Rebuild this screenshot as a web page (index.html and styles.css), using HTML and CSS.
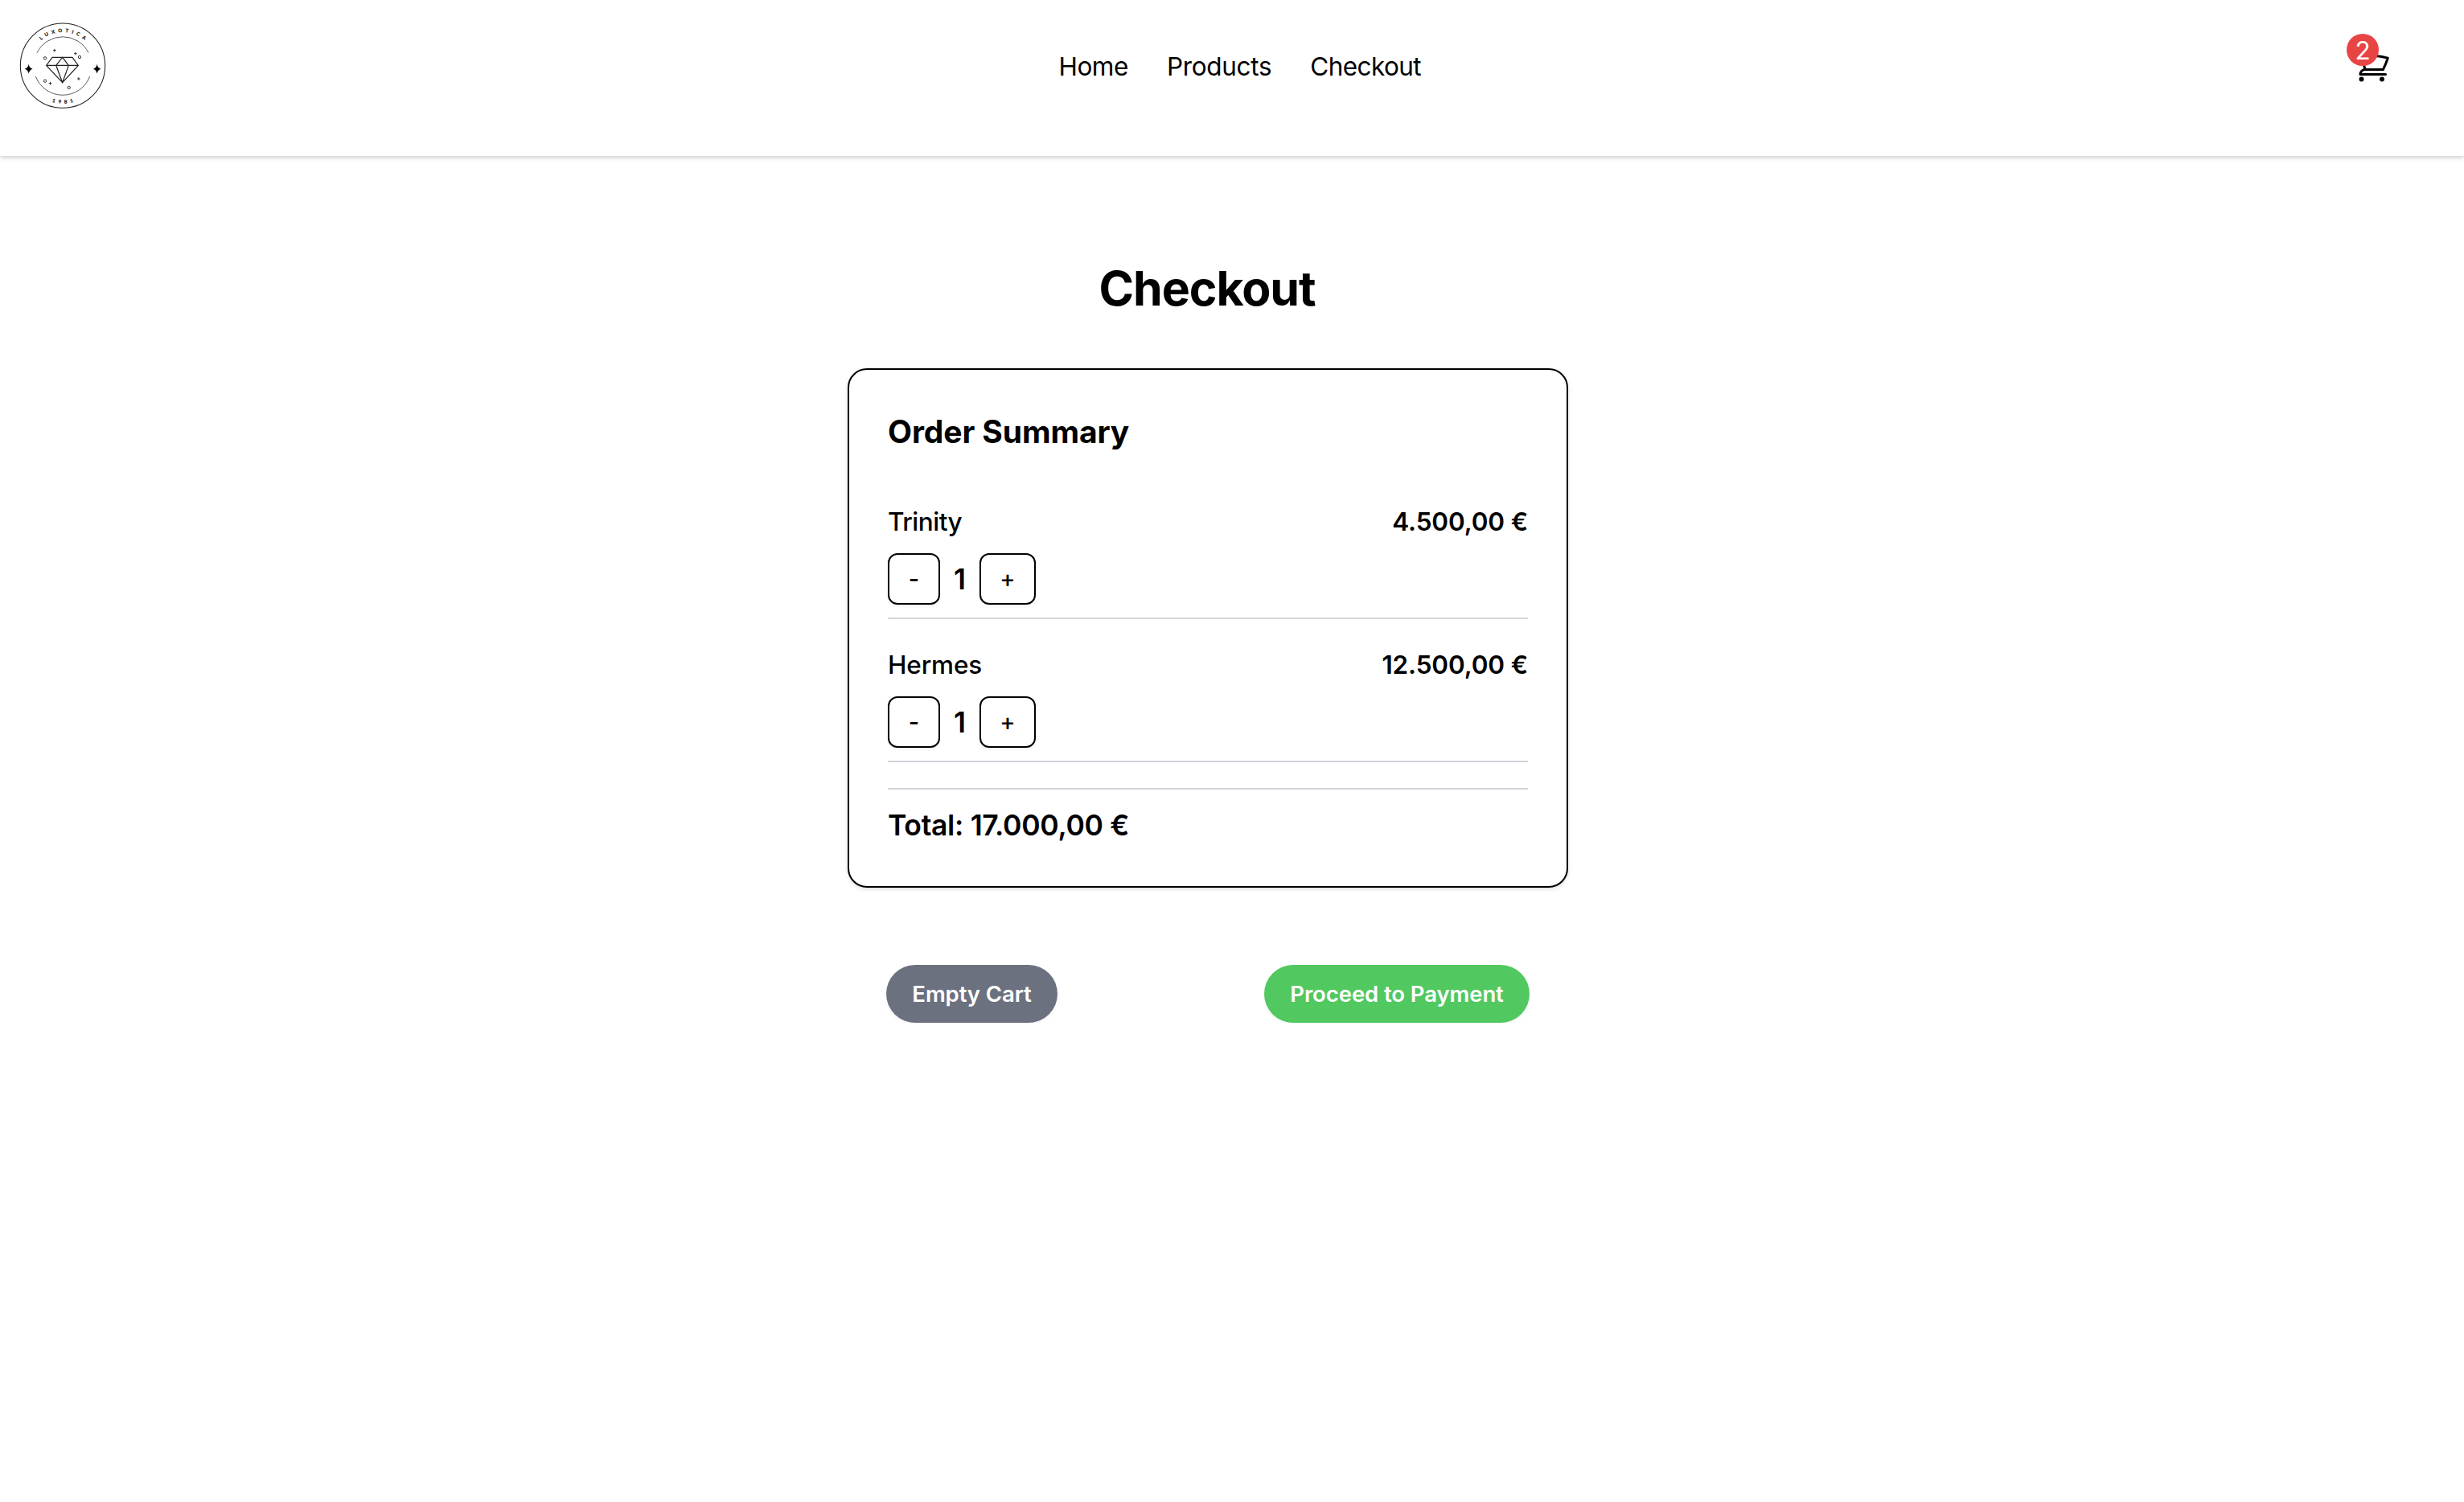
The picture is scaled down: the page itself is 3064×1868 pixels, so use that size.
FILE: index.html
```html
<!DOCTYPE html>
<html lang="en">
<head>
<meta charset="utf-8">
<title>Checkout</title>
<link rel="stylesheet" href="styles.css">
</head>
<body>
<header class="header">
  <a class="logo" href="#" aria-label="Luxotica">
    <svg viewBox="0 0 420 420" width="140" height="140" fill="none" stroke="#222" stroke-width="2.6">
      <defs>
        <path id="arc-top" d="M79 215A125 125 0 0 1 329 215"/>
        <path id="arc-bottom" d="M63 215A141 141 0 0 0 345 215"/>
      </defs>
      <circle cx="204" cy="215" r="158" stroke-width="3.2"/>
      <path d="M108 167A107 107 0 0 1 300 167" stroke="#444"/>
      <path d="M103 255A108 108 0 0 0 305 255" stroke="#444"/>
      <path d="M165 184H240L262 214L203 278L143 214ZM143 214H262M203 184L179 214L203 278L226 214Z" stroke-width="3.6"/>
      <g class="sparks">
        <path d="M168 158h11M173.500 152.500v11M246 170h11M251.500 164.500v11M258 264h11M263.500 258.500v11M152 281h11M157.500 275.500v11"/>
        <circle cx="138" cy="187" r="5"/><circle cx="267" cy="183" r="5"/><circle cx="138" cy="272" r="5"/><circle cx="227" cy="297" r="5"/>
      </g>
      <g fill="#000" stroke="none">
        <path d="M77 209Q79.500 224.500 92 227Q79.500 229.500 77 245Q74.500 229.500 62 227Q74.500 224.500 77 209Z"/>
        <path d="M332 209Q334.500 224.500 347 227Q334.500 229.500 332 245Q329.500 229.500 317 227Q329.500 224.500 332 209Z"/>
      </g>
      <g class="logo-text">
        <text><textPath href="#arc-top" startOffset="50%" textLength="176">LUXOTICA</textPath></text>
        <text><textPath href="#arc-bottom" startOffset="50%" textLength="80">1981</textPath></text>
      </g>
    </svg>
  </a>
  <nav class="nav">
    <a class="nav-home" href="#">Home</a>
    <a class="nav-products" href="#">Products</a>
    <a class="nav-checkout" href="#">Checkout</a>
  </nav>
  <a class="cart" href="#" aria-label="Cart">
    <svg viewBox="0 0 24 24" width="48" height="48" fill="none" stroke="#000" stroke-width="1.5" stroke-linecap="round" stroke-linejoin="round">
      <path d="M2.250 3h1.386c.51 0 .955.343 1.087.835l.383 1.437M7.500 14.250a3 3 0 0 0-3 3h15.750m-12.750-3h11.218c1.121-2.300 2.100-4.684 2.924-7.138a60.114 60.114 0 0 0-16.536-1.840M7.500 14.250 5.106 5.272M6 20.250a.75.75 0 1 1-1.500 0 .75.75 0 0 1 1.500 0Zm12.750 0a.75.75 0 1 1-1.500 0 .75.75 0 0 1 1.500 0Z"/>
    </svg>
    <span class="badge">2</span>
  </a>
</header>
<main class="main">
  <h1 class="title">Checkout</h1>
  <section class="card">
    <h2 class="card-title">Order Summary</h2>
    <ul class="items">
      <li class="item">
        <div class="item-row"><span class="item-name tight">Trinity</span><span class="price">4.500,00 €</span></div>
        <div class="qty"><button class="step minus">-</button><span class="count">1</span><button class="step plus">+</button></div>
      </li>
      <li class="item">
        <div class="item-row"><span class="item-name">Hermes</span><span class="price">12.500,00 €</span></div>
        <div class="qty"><button class="step minus">-</button><span class="count">1</span><button class="step plus">+</button></div>
      </li>
    </ul>
    <p class="total">Total: 17.000,00 €</p>
  </section>
  <div class="actions">
    <button class="btn empty">Empty Cart</button>
    <button class="btn pay">Proceed to Payment</button>
  </div>
</main>
</body>
</html>
```
FILE: styles.css
```css
* { box-sizing: border-box; margin: 0; padding: 0; }

body {
  font-family: "Inter", "Liberation Sans", sans-serif;
  font-size: 31.5px;
  color: #000;
  background: #fff;
}

a { color: inherit; text-decoration: none; }
ul { list-style: none; }
button { font-family: inherit; cursor: pointer; }

.header {
  display: flex;
  align-items: center;
  height: 194px;
  padding: 0 90px 30px 10px;
  background: #fff;
  box-shadow: 0 2px 6px rgba(0, 0, 0, .1), 0 2px 4px rgba(0, 0, 0, .1);
}

.logo { display: block; height: 140px; margin-top: -4px; }
.logo svg { display: block; }
.sparks { stroke-width: 2.8; }
.logo-text {
  font-family: "Lato", "Open Sans", sans-serif;
  font-size: 18px;
  font-weight: 700;
  text-anchor: middle;
  fill: #111;
  stroke: #111;
  stroke-width: .6px;
}

.nav { display: flex; gap: 48px; margin-left: 1166.5px; padding-top: 2px; line-height: 48px; }
.nav-home { letter-spacing: -.464px; }
.nav-products { letter-spacing: -.321px; }
.nav-checkout { letter-spacing: -.584px; }

.cart { position: relative; width: 48px; height: 48px; margin-left: auto; }
.cart svg { display: block; }
.badge {
  position: absolute;
  top: -16px;
  left: -8px;
  width: 40px;
  height: 40px;
  border-radius: 50%;
  background: #e94444;
  color: #fff;
  line-height: 41px;
  text-align: center;
}

.main {
  display: flex;
  flex-direction: column;
  align-items: center;
  padding: 128px 60px 0 0;
}

.title { padding-right: 2px; font-size: 59px; line-height: 73px; letter-spacing: -1.1px; }

.card {
  width: 896px;
  margin-top: 63px;
  padding: 48px;
  border: 2px solid #000;
  border-radius: 24px;
  background: #fff;
  box-shadow: 0 2px 6px rgba(0, 0, 0, .1), 0 2px 4px -2px rgba(0, 0, 0, .1);
}

.card-title { font-size: 39px; line-height: 58px; letter-spacing: -.1px; }
.items { display: flex; flex-direction: column; gap: 32px; margin-top: 58px; }
.item { padding-bottom: 16px; border-bottom: 2px solid #d1d5db; }
.item-row { display: flex; justify-content: space-between; line-height: 49px; }
.item-name { font-weight: 500; letter-spacing: -.144px; }
.tight { letter-spacing: -.5px; }
.price { font-weight: 600; letter-spacing: -.15px; }

.qty { display: flex; align-items: center; gap: 16px; margin-top: 15px; }
.step {
  height: 64px;
  border: 2px solid #000;
  border-radius: 12px;
  background: #fff;
  color: #000;
  font-size: 29px;
  font-weight: 500;
  line-height: 60px;
  box-shadow: 0 2px 4px rgba(0, 0, 0, .05);
}
.minus { width: 65px; }
.plus { width: 70px; }
.count { width: 17px; height: 64px; font-size: 35.5px; font-weight: 600; line-height: 66px; text-align: center; }

.total {
  margin-top: 32px;
  padding-top: 17px;
  border-top: 2px solid #d1d5db;
  font-size: 35.5px;
  font-weight: 600;
  line-height: 55px;
  letter-spacing: -.32px;
}

.actions { display: flex; justify-content: space-between; width: 800px; margin-top: 96px; }
.btn {
  height: 72px;
  border: 0;
  border-radius: 36px;
  color: #fff;
  font-size: 27.5px;
  font-weight: 600;
  letter-spacing: -.09px;
  box-shadow: 0 2px 4px rgba(0, 0, 0, .05);
}
.empty { width: 213px; background: #6c7180; }
.pay { width: 330px; background: #51c860; }
```
